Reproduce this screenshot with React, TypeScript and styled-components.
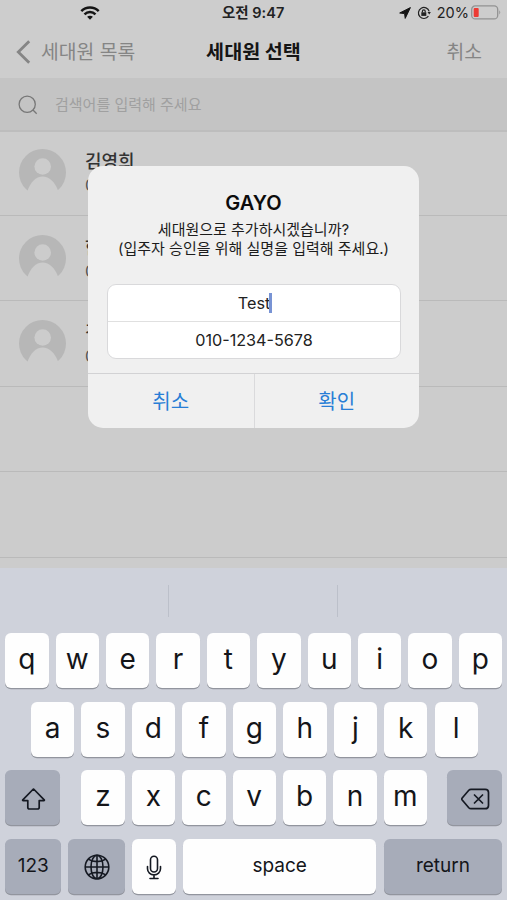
import React from "react";
import styled, { createGlobalStyle } from "styled-components";

const Global = createGlobalStyle`
  *{box-sizing:border-box}
  html,body{margin:0;padding:0}
  body{font-family:Inter,"Noto Sans CJK KR",sans-serif;background:#cdcdcd;color:#111}
  button{border:0;padding:0;background:none;font:inherit;color:inherit}
`;

const Screen = styled.div`
  position: relative;
  width: 507px;
  height: 900px;
  overflow: hidden;
  display: flex;
  flex-direction: column;
  background: #cccccc;
`;
const StatusBar = styled.div`
  height: 25px;
  flex: none;
  display: grid;
  grid-template-columns: 142px 1fr auto;
  align-items: center;
  padding: 0 6px 0 80px;
  background: #cdcdcd;
`;
const Clock = styled.span`
  font-size: 14.5px;
  line-height: 20px;
  font-weight: 600;
  white-space: nowrap;
  color: #222;
`;
const StatusRight = styled.div`
  display: flex;
  align-items: center;
  font-size: 14.5px;
  line-height: 20px;
  color: #222;
`;
const Percent = styled.span`
  margin: 0 2px 0 6px;
`;
const NavBar = styled.header`
  height: 53px;
  flex: none;
  display: grid;
  grid-template-columns: 1fr auto 1fr;
  align-items: center;
  padding: 1px 16px 0;
  background: #cdcdcd;
  font-size: 19.3px;
  line-height: 28px;
  color: #858585;
`;
const Back = styled.button`
  display: flex;
  align-items: center;
  gap: 10px;
`;
const Title = styled.h1`
  margin: 0;
  font-size: 19.6px;
  font-weight: 700;
  color: #151515;
`;
const Cancel = styled.button`
  justify-self: end;
  margin-right: 9px;
`;
const SearchBar = styled.div`
  height: 54px;
  flex: none;
  display: flex;
  align-items: center;
  gap: 17px;
  padding: 2px 0 0 18px;
  background: #c4c4c4;
  border-bottom: 2px solid #bdbdbd;
  font-size: 15px;
  line-height: 22px;
  color: #a0a0a0;
`;
const Row = styled.div`
  height: 85.5px;
  flex: none;
  display: flex;
  padding: 19px 19px 0;
  gap: 19px;
  border-bottom: 1px solid #bababa;
  &:first-child {
    height: 83.5px;
    padding-top: 17px;
  }
`;
const List = styled.main`
  flex: 1;
  min-height: 0;
`;
const Person = styled.div`
  display: flex;
  flex-direction: column;
  line-height: 24px;
`;
const Name = styled.span`
  font-size: 18px;
  font-weight: 500;
  color: #333;
  padding-top: 1px;
`;
const Phone = styled.span`
  font-size: 16px;
  line-height: 22px;
  color: #555;
`;
const Dialog = styled.section`
  position: absolute;
  left: 88px;
  top: 166px;
  width: 331px;
  height: 262px;
  border-radius: 15px;
  background: #f0f0f0;
  display: flex;
  flex-direction: column;
  overflow: hidden;
`;
const DialogTitle = styled.h2`
  margin: 24px 0 0;
  text-align: center;
  font-size: 20px;
  line-height: 26px;
  font-weight: 600;
  color: #0c0c0c;
`;
const Message = styled.p`
  margin: 4px 0 0;
  text-align: center;
  font-size: 15px;
  line-height: 19px;
  color: #1c1c1c;
  white-space: nowrap;
`;
const Fields = styled.div`
  height: 75px;
  margin: 26px 18px 0 19px;
  border: 1px solid #d9d9db;
  border-radius: 9px;
  background: #fff;
  display: grid;
  grid-template-rows: 36px 37px;
`;
const Field = styled.div`
  display: flex;
  align-items: center;
  justify-content: center;
  font-size: 16.2px;
  color: #222;
  & + & {
    border-top: 1px solid #e0e0e0;
  }
`;
const Caret = styled.i`
  width: 3px;
  height: 20px;
  margin: 0 -2px 0 -1px;
  background: #7893d4;
`;
const Actions = styled.div`
  margin-top: auto;
  height: 55px;
  display: grid;
  grid-template-columns: 1fr 1fr;
  border-top: 1px solid #d2d2d4;
`;
const Action = styled.button`
  font-size: 20px;
  color: #287ed6;
  padding-bottom: 2px;
  & + & {
    border-left: 1px solid #dadadc;
  }
`;
const Keyboard = styled.div`
  height: 332px;
  flex: none;
  background: #cfd2db;
  display: flex;
  flex-direction: column;
  position: relative;
`;
const Suggestions = styled.div`
  height: 65px;
  flex: none;
  display: grid;
  grid-template-columns: 168px 169px 1fr;
  padding: 17px 0 16px;
`;
const Suggestion = styled.div`
  & + & {
    border-left: 1px solid #bcc0ca;
  }
`;
const KeyRow = styled.div<{ $inset?: number }>`
  height: 55px;
  margin-bottom: 13.6px;
  flex: none;
  display: flex;
  justify-content: space-between;
  padding: 0 ${(p) => (p.$inset ? p.$inset - 1.8 : 4.8)}px 0 ${(p) => p.$inset ?? 5.2}px;
`;
const KeyGroup = styled.div`
  display: flex;
  gap: 7px;
  padding-left: 1px;
`;
const Key = styled.button<{ $w?: number; $dark?: boolean; $label?: boolean }>`
  width: ${(p) => p.$w ?? 43.4}px;
  height: 55px;
  display: flex;
  align-items: center;
  justify-content: center;
  border-radius: 6px;
  background: ${(p) => (p.$dark ? "#a7acb9" : "#fefefe")};
  box-shadow: 0 1.3px 0 #92959e;
  font-size: ${(p) => (p.$label ? 19 : 28)}px;
  font-weight: ${(p) => (p.$label ? 400 : 380)};
  line-height: 1;
  color: #141519;
  padding-bottom: ${(p) => (p.$label ? 2 : 3)}px;
`;
const SymbolKey = styled(Key)`
  padding: 2px 0 0 1px;
`;

const Wifi = () => (
  <svg width="20" height="14" viewBox="0 0 20 14" fill="none" stroke="#151515" strokeWidth="2.5">
    <path d="M1.3 5.1C6.2.3 13.8.3 18.7 5.1M4.5 8.3c3.1-3 7.9-3 11 0" />
    <path d="M7.1 10.8c1.6-1.5 4.2-1.5 5.8 0L10 13.7z" fill="#151515" stroke="none" />
  </svg>
);
const Location = () => (
  <svg width="12" height="12" viewBox="0 0 12 12">
    <path d="M.7 6 11.4.6 6.2 11.4 5.6 6.6z" fill="#151515" stroke="#151515" strokeWidth="1" strokeLinejoin="round" />
  </svg>
);
const LockSvg = styled.svg`
  margin-left: 6px;
`;
const RotationLock = () => (
  <LockSvg width="14" height="14" viewBox="0 0 14 14" fill="none" stroke="#222" strokeWidth="1.2">
    <path d="M11.4 10.2A5.5 5.5 0 1 1 12.2 5.4" />
    <path d="M10.5 6h3.4l-1.7 2.6z" fill="#222" stroke="none" />
    <path d="M4.3 6.3h5v3.6h-5z" fill="#222" stroke="none" />
    <path d="M5.4 6.6V5.2a1.4 1.4 0 0 1 2.8 0v1.4" />
  </LockSvg>
);
const Battery = () => (
  <svg width="30" height="15" viewBox="0 0 30 15" fill="none">
    <rect x=".7" y=".9" width="26" height="13" rx="3.5" stroke="#929292" strokeWidth="1.3" />
    <rect x="2.7" y="3" width="5" height="9" rx="1" fill="#ec3b34" />
    <path d="M28.3 5.2q1.8 2.2 0 4.4z" fill="#929292" />
  </svg>
);
const Chevron = () => (
  <svg width="15" height="24" viewBox="0 0 15 24" fill="none" stroke="#858585" strokeWidth="2.8">
    <path d="M13.2 1.2 2.3 12l10.9 10.8" />
  </svg>
);
const Search = () => (
  <svg width="20" height="20" viewBox="0 0 20 20" fill="none" stroke="#777" strokeWidth="1.3">
    <circle cx="9.2" cy="9.2" r="8.1" />
    <path d="m15 15 3.7 3.7" />
  </svg>
);
const Avatar = () => (
  <svg width="47" height="47" viewBox="0 0 47 47">
    <circle cx="23.5" cy="23.5" r="23.5" fill="#b7b7b7" />
    <circle cx="23.7" cy="17.5" r="8.3" fill="#cccccc" />
    <path d="M8.4 42c3.2-9 8.4-14.5 15.2-14.5S36 33 39.2 42L38 47H9z" fill="#cccccc" />
  </svg>
);
const Shift = () => (
  <svg width="26" height="24" viewBox="0 0 26 24" fill="none" stroke="#151922" strokeWidth="1.7" strokeLinejoin="round">
    <path d="M13.6 2 24.2 12.8q.5.8-.4.8h-4.6v6.6q0 1.8-1.8 1.8H9.6q-1.8 0-1.8-1.8v-6.6H3.2q-.9 0-.4-.8L13.4 2z" />
  </svg>
);
const Delete = () => (
  <svg width="29" height="22" viewBox="0 0 29 22" fill="none" stroke="#151922" strokeWidth="1.7" strokeLinecap="round" strokeLinejoin="round">
    <path d="M10 1.3h14.2q3.3 0 3.3 3.3v12.8q0 3.3-3.3 3.3H10q-1.3 0-2.2-1L1.2 12q-.8-1 0-2l6.6-7.7q.9-1 2.2-1zM13.5 7l8 8m0-8-8 8" />
  </svg>
);
const Globe = () => (
  <svg width="26" height="26" viewBox="0 0 26 26" fill="none" stroke="#151922" strokeWidth="1.6">
    <circle cx="13" cy="13" r="11.8" />
    <ellipse cx="13" cy="13" rx="6" ry="11.8" />
    <path d="M13 1v24M1 13h24M4.2 5.2c5 3.2 12.6 3.2 17.6 0M4.2 20.8c5-3.2 12.6-3.2 17.6 0" />
  </svg>
);
const Mic = () => (
  <svg width="16" height="25" viewBox="0 0 16 25" fill="none" stroke="#151922" strokeWidth="1.6" strokeLinecap="round">
    <rect x="4.5" y="1.2" width="7" height="15.8" rx="3.5" />
    <path d="M1.5 11.5v2.2a6.5 6.2 0 0 0 13 0v-2.2M8 20v3.5M4 23.5h8" />
  </svg>
);

const people = [
  { name: "김영희", phone: "010" },
  { name: "한", phone: "010" },
  { name: "김", phone: "010" },
];
const letters = (s: string) => s.split("").map((c) => <Key key={c}>{c}</Key>);

export default function App() {
  return (
    <Screen>
      <Global />
      <StatusBar>
        <Wifi />
        <Clock>오전 9:47</Clock>
        <StatusRight>
          <Location />
          <RotationLock />
          <Percent>20%</Percent>
          <Battery />
        </StatusRight>
      </StatusBar>
      <NavBar>
        <Back><Chevron />세대원 목록</Back>
        <Title>세대원 선택</Title>
        <Cancel>취소</Cancel>
      </NavBar>
      <SearchBar><Search />검색어를 입력해 주세요</SearchBar>
      <List>
        {people.map((p) => (
          <Row key={p.name}>
            <Avatar />
            <Person><Name>{p.name}</Name><Phone>{p.phone}</Phone></Person>
          </Row>
        ))}
        <Row />
        <Row />
      </List>
      <Keyboard>
        <Suggestions><Suggestion /><Suggestion /><Suggestion /></Suggestions>
        <KeyRow>{letters("qwertyuiop")}</KeyRow>
        <KeyRow $inset={30.8}>{letters("asdfghjkl")}</KeyRow>
        <KeyRow>
          <SymbolKey $w={55} $dark><Shift /></SymbolKey>
          <KeyGroup>{letters("zxcvbnm")}</KeyGroup>
          <SymbolKey $w={55} $dark><Delete /></SymbolKey>
        </KeyRow>
        <KeyRow>
          <Key $w={56} $dark $label>123</Key>
          <SymbolKey $w={56.5} $dark><Globe /></SymbolKey>
          <SymbolKey><Mic /></SymbolKey>
          <Key $w={193.5} $label>space</Key>
          <Key $w={118.5} $dark $label>return</Key>
        </KeyRow>
      </Keyboard>
      <Dialog>
        <DialogTitle>GAYO</DialogTitle>
        <Message>세대원으로 추가하시겠습니까?<br />(입주자 승인을 위해 실명을 입력해 주세요.)</Message>
        <Fields>
          <Field>Test<Caret /></Field>
          <Field>010-1234-5678</Field>
        </Fields>
        <Actions><Action>취소</Action><Action>확인</Action></Actions>
      </Dialog>
    </Screen>
  );
}
